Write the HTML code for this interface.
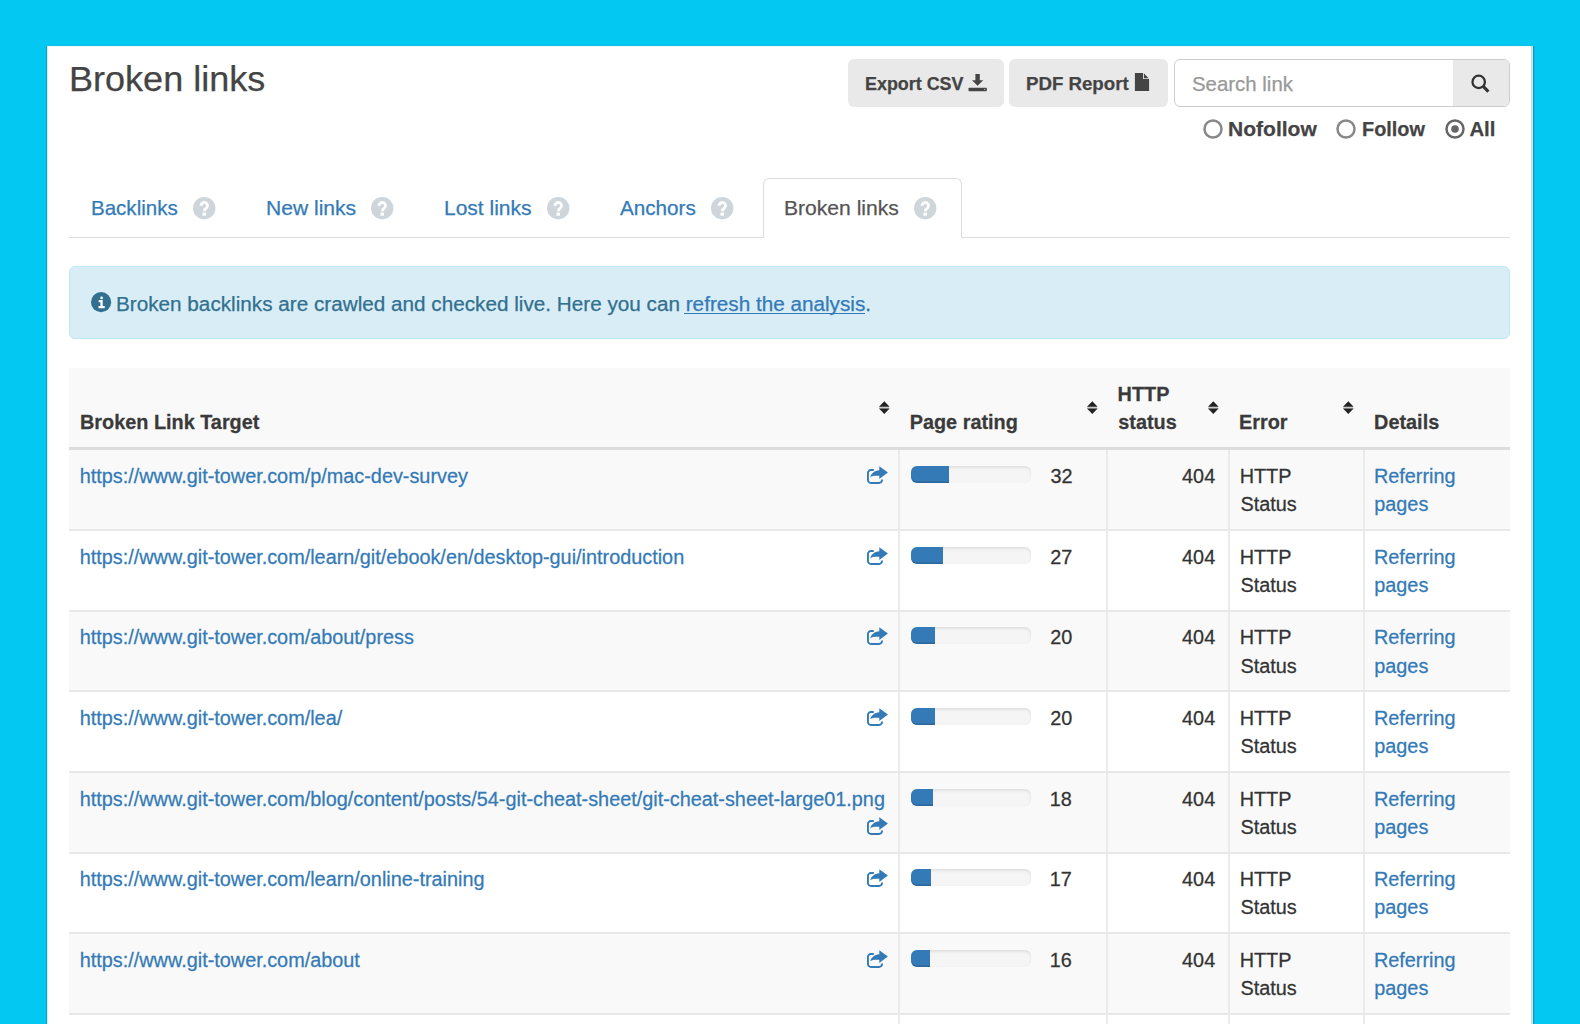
<!DOCTYPE html><html><head><meta charset="utf-8"><style>
html,body{margin:0;padding:0;}
body{width:1580px;height:1024px;overflow:hidden;background:#03c8f1;position:relative;font-family:"Liberation Sans",sans-serif;}
.t{position:absolute;white-space:nowrap;-webkit-text-stroke:0.25px currentColor;}
.b{position:absolute;box-sizing:border-box;}
svg{position:absolute;overflow:visible;}
</style></head><body>
<div class="b" style="left:47.00px;top:46.00px;width:1484.00px;height:978.00px;background:#fff;"></div>
<div class="b" style="left:46.00px;top:46.00px;width:1.00px;height:978.00px;background:#2497b3;"></div>
<div class="b" style="left:47.00px;top:46.00px;width:1.00px;height:978.00px;background:#c2f5fd;"></div>
<div class="b" style="left:47.00px;top:45.00px;width:1484.00px;height:1.00px;background:#14bce0;"></div>
<div class="b" style="left:48.00px;top:46.00px;width:1483.00px;height:1.00px;background:#ecfcff;"></div>
<div class="b" style="left:1531.00px;top:46.00px;width:1.00px;height:978.00px;background:#c5dbe0;"></div>
<div class="b" style="left:1532.00px;top:46.00px;width:1.00px;height:978.00px;background:#b8eef8;"></div>
<div class="b" style="left:1533.00px;top:46.00px;width:1.00px;height:978.00px;background:#1f92ae;"></div>
<div class="b" style="left:1534.00px;top:46.00px;width:1.00px;height:978.00px;background:#12b6dc;"></div>
<div class="t" style="left:68.81px;top:57.92px;font-size:35.90px;line-height:43.08px;color:#444;transform:scale(1.0043,1.0000);transform-origin:0 33.98px;">Broken links</div>
<div class="b" style="left:848.00px;top:59.00px;width:155.50px;height:47.50px;background:#e9e9e9;border-radius:6px;"></div>
<div class="t" style="left:864.58px;top:72.98px;font-size:18.40px;line-height:22.08px;color:#444;font-weight:bold;transform:scale(0.9732,1.0000);transform-origin:0 17.42px;">Export CSV</div>
<div class="b" style="left:1009.00px;top:59.00px;width:159.30px;height:47.50px;background:#e9e9e9;border-radius:6px;"></div>
<div class="t" style="left:1025.73px;top:72.98px;font-size:18.40px;line-height:22.08px;color:#444;font-weight:bold;transform:scale(1.0145,1.0000);transform-origin:0 17.42px;">PDF Report</div>
<svg style="left:966px;top:70px" width="24" height="24" viewBox="0 0 24 24"><path d="M9.4 4.1h4.4V10.2h3.4L11.6 15.8 6 10.2h3.4z" fill="#444"/><rect x="2.5" y="17.7" width="18.3" height="3.6" rx="0.8" fill="#444"/><circle cx="18.6" cy="19.4" r="0.6" fill="#bbb"/></svg>
<svg style="left:1134px;top:72px" width="18" height="22" viewBox="0 0 18 22"><path d="M0.9 1H9.1V7H15.1V19.1H0.9z" fill="#444"/><path d="M10 1.5V6.3H14.6z" fill="#444"/></svg>
<div class="b" style="left:1174.00px;top:59.00px;width:336.00px;height:48.00px;background:#fff;border:1.4px solid #ccc;border-radius:6px;"></div>
<div class="b" style="left:1452.70px;top:60.40px;width:55.90px;height:45.20px;background:#e9e9e9;border-radius:0 5px 5px 0;"></div>
<div class="t" style="left:1191.72px;top:72.49px;font-size:20.30px;line-height:24.36px;color:#999;transform:scale(1.0060,1.0000);transform-origin:0 19.21px;">Search link</div>
<svg style="left:1466px;top:70px" width="28" height="28" viewBox="0 0 28 28"><circle cx="12.7" cy="11.9" r="6.2" fill="none" stroke="#333" stroke-width="2.3"/><path d="M17.2 16.4l5.2 5.2" stroke="#333" stroke-width="3"/></svg>
<svg style="left:1202.15px;top:118.45px" width="22" height="22" viewBox="0 0 22 22"><circle cx="11" cy="11" r="8.5" fill="#fff" stroke="#888" stroke-width="2.5"/></svg>
<div class="t" style="left:1227.98px;top:117.29px;font-size:20.40px;line-height:24.48px;color:#444;font-weight:bold;transform:scale(1.0313,1.0000);transform-origin:0 19.31px;">Nofollow</div>
<svg style="left:1335.00px;top:118.45px" width="22" height="22" viewBox="0 0 22 22"><circle cx="11" cy="11" r="8.5" fill="#fff" stroke="#888" stroke-width="2.5"/></svg>
<div class="t" style="left:1361.66px;top:117.29px;font-size:20.40px;line-height:24.48px;color:#444;font-weight:bold;transform:scale(0.9739,1.0000);transform-origin:0 19.31px;">Follow</div>
<svg style="left:1443.50px;top:118.45px" width="22" height="22" viewBox="0 0 22 22"><circle cx="11" cy="11" r="8.5" fill="#fff" stroke="#666" stroke-width="2.5"/><circle cx="11" cy="11" r="3.8" fill="#666"/></svg>
<div class="t" style="left:1469.40px;top:117.29px;font-size:20.40px;line-height:24.48px;color:#444;font-weight:bold;">All</div>
<div class="b" style="left:69.00px;top:236.60px;width:1441.00px;height:1.40px;background:#ddd;"></div>
<div class="b" style="left:763.40px;top:178.20px;width:198.60px;height:59.80px;background:#fff;border:1.4px solid #ddd;border-bottom:none;border-radius:6px 6px 0 0;"></div>
<div class="t" style="left:91.31px;top:196.96px;font-size:19.80px;line-height:23.76px;color:#337ab7;transform:scale(1.0375,1.0000);transform-origin:0 18.74px;">Backlinks</div>
<svg style="left:193.20px;top:196.90px" width="22.4" height="22.4" viewBox="0 0 22.4 22.4"><circle cx="11.2" cy="11.2" r="11.2" fill="#ced6db"/><path d="M8 8.7A3.25 3.25 0 1 1 13.3 11.2C12 12 11.3 12.4 11.3 14.2" fill="none" stroke="#fff" stroke-width="2.9"/><rect x="9.5" y="15.6" width="3.5" height="3.1" fill="#fff"/></svg>
<div class="t" style="left:266.07px;top:196.96px;font-size:19.80px;line-height:23.76px;color:#337ab7;transform:scale(1.0646,1.0000);transform-origin:0 18.74px;">New links</div>
<svg style="left:371.00px;top:196.90px" width="22.4" height="22.4" viewBox="0 0 22.4 22.4"><circle cx="11.2" cy="11.2" r="11.2" fill="#ced6db"/><path d="M8 8.7A3.25 3.25 0 1 1 13.3 11.2C12 12 11.3 12.4 11.3 14.2" fill="none" stroke="#fff" stroke-width="2.9"/><rect x="9.5" y="15.6" width="3.5" height="3.1" fill="#fff"/></svg>
<div class="t" style="left:443.58px;top:196.96px;font-size:19.80px;line-height:23.76px;color:#337ab7;transform:scale(1.0608,1.0000);transform-origin:0 18.74px;">Lost links</div>
<svg style="left:546.50px;top:196.90px" width="22.4" height="22.4" viewBox="0 0 22.4 22.4"><circle cx="11.2" cy="11.2" r="11.2" fill="#ced6db"/><path d="M8 8.7A3.25 3.25 0 1 1 13.3 11.2C12 12 11.3 12.4 11.3 14.2" fill="none" stroke="#fff" stroke-width="2.9"/><rect x="9.5" y="15.6" width="3.5" height="3.1" fill="#fff"/></svg>
<div class="t" style="left:620.30px;top:196.96px;font-size:19.80px;line-height:23.76px;color:#337ab7;transform:scale(1.0449,1.0000);transform-origin:0 18.74px;">Anchors</div>
<svg style="left:711.30px;top:196.90px" width="22.4" height="22.4" viewBox="0 0 22.4 22.4"><circle cx="11.2" cy="11.2" r="11.2" fill="#ced6db"/><path d="M8 8.7A3.25 3.25 0 1 1 13.3 11.2C12 12 11.3 12.4 11.3 14.2" fill="none" stroke="#fff" stroke-width="2.9"/><rect x="9.5" y="15.6" width="3.5" height="3.1" fill="#fff"/></svg>
<div class="t" style="left:784.37px;top:196.96px;font-size:19.80px;line-height:23.76px;color:#555;transform:scale(1.0654,1.0000);transform-origin:0 18.74px;">Broken links</div>
<svg style="left:914.40px;top:196.90px" width="22.4" height="22.4" viewBox="0 0 22.4 22.4"><circle cx="11.2" cy="11.2" r="11.2" fill="#ced6db"/><path d="M8 8.7A3.25 3.25 0 1 1 13.3 11.2C12 12 11.3 12.4 11.3 14.2" fill="none" stroke="#fff" stroke-width="2.9"/><rect x="9.5" y="15.6" width="3.5" height="3.1" fill="#fff"/></svg>
<div class="b" style="left:69.00px;top:266.40px;width:1441.00px;height:73.00px;background:#d9edf7;border:1.4px solid #bce8f1;border-radius:6px;"></div>
<svg style="left:91.3px;top:292px" width="20.4" height="20.4" viewBox="0 0 20.4 20.4"><circle cx="10.1" cy="10.2" r="10.1" fill="#31708f"/><circle cx="10.6" cy="5.9" r="1.35" fill="#fff"/><path d="M7.7 8h4v6h2v2.2H7.5V14h1.9v-3.8H7.7z" fill="#fff"/></svg>
<div class="t" style="left:115.92px;top:291.87px;font-size:20.0px;line-height:24px;color:#31708f;transform:scaleX(1.0353);transform-origin:0 0;">Broken backlinks are crawled and checked live. Here you can <span style="color:#337ab7;">refresh the analysis</span>.</div>
<div class="b" style="left:684.00px;top:312.60px;width:181.40px;height:1.30px;background:#337ab7;"></div>
<div class="b" style="left:69.00px;top:368.00px;width:1441.00px;height:79.00px;background:#f9f9f9;"></div>
<div class="b" style="left:69.00px;top:447.00px;width:1441.00px;height:3.00px;background:#ddd;"></div>
<div class="t" style="left:80.03px;top:411.01px;font-size:19.85px;line-height:23.82px;color:#3a3a3a;font-weight:bold;transform:scale(1.0000,1.0350);transform-origin:0 18.79px;">Broken Link Target</div>
<svg style="left:878.80px;top:401.20px" width="10.6" height="13" viewBox="0 0 10.6 13"><rect x="0.3" y="5.6" width="10" height="2.2" fill="#c9cccd"/><path d="M5.3 0.2L10.6 5.8H0z" fill="#222"/><path d="M5.3 12.9L10.6 7.6H0z" fill="#222"/></svg>
<div class="t" style="left:909.73px;top:411.01px;font-size:19.85px;line-height:23.82px;color:#3a3a3a;font-weight:bold;transform:scale(1.0000,1.0350);transform-origin:0 18.79px;">Page rating</div>
<svg style="left:1087.00px;top:401.20px" width="10.6" height="13" viewBox="0 0 10.6 13"><rect x="0.3" y="5.6" width="10" height="2.2" fill="#c9cccd"/><path d="M5.3 0.2L10.6 5.8H0z" fill="#222"/><path d="M5.3 12.9L10.6 7.6H0z" fill="#222"/></svg>
<div class="t" style="left:1117.62px;top:382.91px;font-size:19.85px;line-height:23.82px;color:#3a3a3a;font-weight:bold;transform:scale(1.0000,1.0350);transform-origin:0 18.79px;">HTTP</div>
<div class="t" style="left:1118.25px;top:411.01px;font-size:19.85px;line-height:23.82px;color:#3a3a3a;font-weight:bold;transform:scale(1.0000,1.0350);transform-origin:0 18.79px;">status</div>
<svg style="left:1207.70px;top:401.20px" width="10.6" height="13" viewBox="0 0 10.6 13"><rect x="0.3" y="5.6" width="10" height="2.2" fill="#c9cccd"/><path d="M5.3 0.2L10.6 5.8H0z" fill="#222"/><path d="M5.3 12.9L10.6 7.6H0z" fill="#222"/></svg>
<div class="t" style="left:1239.03px;top:411.01px;font-size:19.85px;line-height:23.82px;color:#3a3a3a;font-weight:bold;transform:scale(1.0000,1.0350);transform-origin:0 18.79px;">Error</div>
<svg style="left:1343.00px;top:401.20px" width="10.6" height="13" viewBox="0 0 10.6 13"><rect x="0.3" y="5.6" width="10" height="2.2" fill="#c9cccd"/><path d="M5.3 0.2L10.6 5.8H0z" fill="#222"/><path d="M5.3 12.9L10.6 7.6H0z" fill="#222"/></svg>
<div class="t" style="left:1374.12px;top:411.01px;font-size:19.85px;line-height:23.82px;color:#3a3a3a;font-weight:bold;transform:scale(1.0000,1.0350);transform-origin:0 18.79px;">Details</div>
<div class="b" style="left:69.00px;top:450.00px;width:1441.00px;height:79.90px;background:#f9f9f9;"></div>
<div class="t" style="left:79.72px;top:465.01px;font-size:19.85px;line-height:23.82px;color:#337ab7;transform:scale(1.0000,1.0350);transform-origin:0 18.79px;">https://www.git-tower.com/p/mac-dev-survey</div>
<svg style="left:866.00px;top:465.00px" width="23" height="21" viewBox="0 0 23 21"><path d="M7.8 5.05H5A3 3 0 0 0 1.95 8.05V15.05A3 3 0 0 0 5 18.05H13.05A3 3 0 0 0 16.05 15.05V14.6" fill="none" stroke="#337ab7" stroke-width="1.9"/><path d="M13.3 1.2L21.9 7.5L13.3 13.9V10.8C9.5 10.5 6.5 10.6 4.3 12.3C5.2 8.5 8.5 5.5 13.3 5.3Z" fill="#337ab7"/></svg>
<div class="b" style="left:911.00px;top:466.00px;width:119.50px;height:17.00px;background:#f5f5f5;border-radius:6px;box-shadow:inset 0 1.4px 2.8px rgba(0,0,0,.1);overflow:hidden;"></div>
<div class="b" style="left:911.00px;top:466.00px;width:38.24px;height:17.00px;background:#337ab7;border-radius:6px 0 0 6px;box-shadow:inset 0 -1.4px 0 rgba(0,0,0,.15);"></div>
<div class="t" style="left:1050.45px;top:465.01px;font-size:19.85px;line-height:23.82px;color:#333;transform:scale(1.0000,1.0350);transform-origin:0 18.79px;">32</div>
<div class="t" style="left:1182.08px;top:465.01px;font-size:19.85px;line-height:23.82px;color:#333;transform:scale(1.0000,1.0350);transform-origin:0 18.79px;">404</div>
<div class="t" style="left:1239.67px;top:465.01px;font-size:19.85px;line-height:23.82px;color:#333;transform:scale(1.0000,1.0350);transform-origin:0 18.79px;">HTTP</div>
<div class="t" style="left:1240.42px;top:493.21px;font-size:19.85px;line-height:23.82px;color:#333;transform:scale(1.0000,1.0350);transform-origin:0 18.79px;">Status</div>
<div class="t" style="left:1373.88px;top:465.01px;font-size:19.85px;line-height:23.82px;color:#337ab7;transform:scale(1.0000,1.0350);transform-origin:0 18.79px;">Referring</div>
<div class="t" style="left:1374.25px;top:493.21px;font-size:19.85px;line-height:23.82px;color:#337ab7;transform:scale(1.0000,1.0350);transform-origin:0 18.79px;">pages</div>
<div class="t" style="left:79.72px;top:545.66px;font-size:19.85px;line-height:23.82px;color:#337ab7;transform:scale(1.0000,1.0350);transform-origin:0 18.79px;">https://www.git-tower.com/learn/git/ebook/en/desktop-gui/introduction</div>
<svg style="left:866.00px;top:545.65px" width="23" height="21" viewBox="0 0 23 21"><path d="M7.8 5.05H5A3 3 0 0 0 1.95 8.05V15.05A3 3 0 0 0 5 18.05H13.05A3 3 0 0 0 16.05 15.05V14.6" fill="none" stroke="#337ab7" stroke-width="1.9"/><path d="M13.3 1.2L21.9 7.5L13.3 13.9V10.8C9.5 10.5 6.5 10.6 4.3 12.3C5.2 8.5 8.5 5.5 13.3 5.3Z" fill="#337ab7"/></svg>
<div class="b" style="left:911.00px;top:546.65px;width:119.50px;height:17.00px;background:#f5f5f5;border-radius:6px;box-shadow:inset 0 1.4px 2.8px rgba(0,0,0,.1);overflow:hidden;"></div>
<div class="b" style="left:911.00px;top:546.65px;width:32.26px;height:17.00px;background:#337ab7;border-radius:6px 0 0 6px;box-shadow:inset 0 -1.4px 0 rgba(0,0,0,.15);"></div>
<div class="t" style="left:1050.20px;top:545.66px;font-size:19.85px;line-height:23.82px;color:#333;transform:scale(1.0000,1.0350);transform-origin:0 18.79px;">27</div>
<div class="t" style="left:1182.08px;top:545.66px;font-size:19.85px;line-height:23.82px;color:#333;transform:scale(1.0000,1.0350);transform-origin:0 18.79px;">404</div>
<div class="t" style="left:1239.67px;top:545.66px;font-size:19.85px;line-height:23.82px;color:#333;transform:scale(1.0000,1.0350);transform-origin:0 18.79px;">HTTP</div>
<div class="t" style="left:1240.42px;top:573.86px;font-size:19.85px;line-height:23.82px;color:#333;transform:scale(1.0000,1.0350);transform-origin:0 18.79px;">Status</div>
<div class="t" style="left:1373.88px;top:545.66px;font-size:19.85px;line-height:23.82px;color:#337ab7;transform:scale(1.0000,1.0350);transform-origin:0 18.79px;">Referring</div>
<div class="t" style="left:1374.25px;top:573.86px;font-size:19.85px;line-height:23.82px;color:#337ab7;transform:scale(1.0000,1.0350);transform-origin:0 18.79px;">pages</div>
<div class="b" style="left:69.00px;top:611.30px;width:1441.00px;height:79.90px;background:#f9f9f9;"></div>
<div class="t" style="left:79.72px;top:626.31px;font-size:19.85px;line-height:23.82px;color:#337ab7;transform:scale(1.0000,1.0350);transform-origin:0 18.79px;">https://www.git-tower.com/about/press</div>
<svg style="left:866.00px;top:626.30px" width="23" height="21" viewBox="0 0 23 21"><path d="M7.8 5.05H5A3 3 0 0 0 1.95 8.05V15.05A3 3 0 0 0 5 18.05H13.05A3 3 0 0 0 16.05 15.05V14.6" fill="none" stroke="#337ab7" stroke-width="1.9"/><path d="M13.3 1.2L21.9 7.5L13.3 13.9V10.8C9.5 10.5 6.5 10.6 4.3 12.3C5.2 8.5 8.5 5.5 13.3 5.3Z" fill="#337ab7"/></svg>
<div class="b" style="left:911.00px;top:627.30px;width:119.50px;height:17.00px;background:#f5f5f5;border-radius:6px;box-shadow:inset 0 1.4px 2.8px rgba(0,0,0,.1);overflow:hidden;"></div>
<div class="b" style="left:911.00px;top:627.30px;width:23.90px;height:17.00px;background:#337ab7;border-radius:6px 0 0 6px;box-shadow:inset 0 -1.4px 0 rgba(0,0,0,.15);"></div>
<div class="t" style="left:1050.20px;top:626.31px;font-size:19.85px;line-height:23.82px;color:#333;transform:scale(1.0000,1.0350);transform-origin:0 18.79px;">20</div>
<div class="t" style="left:1182.08px;top:626.31px;font-size:19.85px;line-height:23.82px;color:#333;transform:scale(1.0000,1.0350);transform-origin:0 18.79px;">404</div>
<div class="t" style="left:1239.67px;top:626.31px;font-size:19.85px;line-height:23.82px;color:#333;transform:scale(1.0000,1.0350);transform-origin:0 18.79px;">HTTP</div>
<div class="t" style="left:1240.42px;top:654.51px;font-size:19.85px;line-height:23.82px;color:#333;transform:scale(1.0000,1.0350);transform-origin:0 18.79px;">Status</div>
<div class="t" style="left:1373.88px;top:626.31px;font-size:19.85px;line-height:23.82px;color:#337ab7;transform:scale(1.0000,1.0350);transform-origin:0 18.79px;">Referring</div>
<div class="t" style="left:1374.25px;top:654.51px;font-size:19.85px;line-height:23.82px;color:#337ab7;transform:scale(1.0000,1.0350);transform-origin:0 18.79px;">pages</div>
<div class="t" style="left:79.72px;top:706.96px;font-size:19.85px;line-height:23.82px;color:#337ab7;transform:scale(1.0000,1.0350);transform-origin:0 18.79px;">https://www.git-tower.com/lea/</div>
<svg style="left:866.00px;top:706.95px" width="23" height="21" viewBox="0 0 23 21"><path d="M7.8 5.05H5A3 3 0 0 0 1.95 8.05V15.05A3 3 0 0 0 5 18.05H13.05A3 3 0 0 0 16.05 15.05V14.6" fill="none" stroke="#337ab7" stroke-width="1.9"/><path d="M13.3 1.2L21.9 7.5L13.3 13.9V10.8C9.5 10.5 6.5 10.6 4.3 12.3C5.2 8.5 8.5 5.5 13.3 5.3Z" fill="#337ab7"/></svg>
<div class="b" style="left:911.00px;top:707.95px;width:119.50px;height:17.00px;background:#f5f5f5;border-radius:6px;box-shadow:inset 0 1.4px 2.8px rgba(0,0,0,.1);overflow:hidden;"></div>
<div class="b" style="left:911.00px;top:707.95px;width:23.90px;height:17.00px;background:#337ab7;border-radius:6px 0 0 6px;box-shadow:inset 0 -1.4px 0 rgba(0,0,0,.15);"></div>
<div class="t" style="left:1050.20px;top:706.96px;font-size:19.85px;line-height:23.82px;color:#333;transform:scale(1.0000,1.0350);transform-origin:0 18.79px;">20</div>
<div class="t" style="left:1182.08px;top:706.96px;font-size:19.85px;line-height:23.82px;color:#333;transform:scale(1.0000,1.0350);transform-origin:0 18.79px;">404</div>
<div class="t" style="left:1239.67px;top:706.96px;font-size:19.85px;line-height:23.82px;color:#333;transform:scale(1.0000,1.0350);transform-origin:0 18.79px;">HTTP</div>
<div class="t" style="left:1240.42px;top:735.16px;font-size:19.85px;line-height:23.82px;color:#333;transform:scale(1.0000,1.0350);transform-origin:0 18.79px;">Status</div>
<div class="t" style="left:1373.88px;top:706.96px;font-size:19.85px;line-height:23.82px;color:#337ab7;transform:scale(1.0000,1.0350);transform-origin:0 18.79px;">Referring</div>
<div class="t" style="left:1374.25px;top:735.16px;font-size:19.85px;line-height:23.82px;color:#337ab7;transform:scale(1.0000,1.0350);transform-origin:0 18.79px;">pages</div>
<div class="b" style="left:69.00px;top:772.60px;width:1441.00px;height:79.90px;background:#f9f9f9;"></div>
<div class="t" style="left:79.72px;top:787.61px;font-size:19.85px;line-height:23.82px;color:#337ab7;transform:scale(1.0000,1.0350);transform-origin:0 18.79px;">https://www.git-tower.com/blog/content/posts/54-git-cheat-sheet/git-cheat-sheet-large01.png</div>
<svg style="left:866.00px;top:815.80px" width="23" height="21" viewBox="0 0 23 21"><path d="M7.8 5.05H5A3 3 0 0 0 1.95 8.05V15.05A3 3 0 0 0 5 18.05H13.05A3 3 0 0 0 16.05 15.05V14.6" fill="none" stroke="#337ab7" stroke-width="1.9"/><path d="M13.3 1.2L21.9 7.5L13.3 13.9V10.8C9.5 10.5 6.5 10.6 4.3 12.3C5.2 8.5 8.5 5.5 13.3 5.3Z" fill="#337ab7"/></svg>
<div class="b" style="left:911.00px;top:788.60px;width:119.50px;height:17.00px;background:#f5f5f5;border-radius:6px;box-shadow:inset 0 1.4px 2.8px rgba(0,0,0,.1);overflow:hidden;"></div>
<div class="b" style="left:911.00px;top:788.60px;width:21.51px;height:17.00px;background:#337ab7;border-radius:6px 0 0 6px;box-shadow:inset 0 -1.4px 0 rgba(0,0,0,.15);"></div>
<div class="t" style="left:1049.70px;top:787.61px;font-size:19.85px;line-height:23.82px;color:#333;transform:scale(1.0000,1.0350);transform-origin:0 18.79px;">18</div>
<div class="t" style="left:1182.08px;top:787.61px;font-size:19.85px;line-height:23.82px;color:#333;transform:scale(1.0000,1.0350);transform-origin:0 18.79px;">404</div>
<div class="t" style="left:1239.67px;top:787.61px;font-size:19.85px;line-height:23.82px;color:#333;transform:scale(1.0000,1.0350);transform-origin:0 18.79px;">HTTP</div>
<div class="t" style="left:1240.42px;top:815.81px;font-size:19.85px;line-height:23.82px;color:#333;transform:scale(1.0000,1.0350);transform-origin:0 18.79px;">Status</div>
<div class="t" style="left:1373.88px;top:787.61px;font-size:19.85px;line-height:23.82px;color:#337ab7;transform:scale(1.0000,1.0350);transform-origin:0 18.79px;">Referring</div>
<div class="t" style="left:1374.25px;top:815.81px;font-size:19.85px;line-height:23.82px;color:#337ab7;transform:scale(1.0000,1.0350);transform-origin:0 18.79px;">pages</div>
<div class="t" style="left:79.72px;top:868.26px;font-size:19.85px;line-height:23.82px;color:#337ab7;transform:scale(1.0000,1.0350);transform-origin:0 18.79px;">https://www.git-tower.com/learn/online-training</div>
<svg style="left:866.00px;top:868.25px" width="23" height="21" viewBox="0 0 23 21"><path d="M7.8 5.05H5A3 3 0 0 0 1.95 8.05V15.05A3 3 0 0 0 5 18.05H13.05A3 3 0 0 0 16.05 15.05V14.6" fill="none" stroke="#337ab7" stroke-width="1.9"/><path d="M13.3 1.2L21.9 7.5L13.3 13.9V10.8C9.5 10.5 6.5 10.6 4.3 12.3C5.2 8.5 8.5 5.5 13.3 5.3Z" fill="#337ab7"/></svg>
<div class="b" style="left:911.00px;top:869.25px;width:119.50px;height:17.00px;background:#f5f5f5;border-radius:6px;box-shadow:inset 0 1.4px 2.8px rgba(0,0,0,.1);overflow:hidden;"></div>
<div class="b" style="left:911.00px;top:869.25px;width:20.32px;height:17.00px;background:#337ab7;border-radius:6px 0 0 6px;box-shadow:inset 0 -1.4px 0 rgba(0,0,0,.15);"></div>
<div class="t" style="left:1049.70px;top:868.26px;font-size:19.85px;line-height:23.82px;color:#333;transform:scale(1.0000,1.0350);transform-origin:0 18.79px;">17</div>
<div class="t" style="left:1182.08px;top:868.26px;font-size:19.85px;line-height:23.82px;color:#333;transform:scale(1.0000,1.0350);transform-origin:0 18.79px;">404</div>
<div class="t" style="left:1239.67px;top:868.26px;font-size:19.85px;line-height:23.82px;color:#333;transform:scale(1.0000,1.0350);transform-origin:0 18.79px;">HTTP</div>
<div class="t" style="left:1240.42px;top:896.46px;font-size:19.85px;line-height:23.82px;color:#333;transform:scale(1.0000,1.0350);transform-origin:0 18.79px;">Status</div>
<div class="t" style="left:1373.88px;top:868.26px;font-size:19.85px;line-height:23.82px;color:#337ab7;transform:scale(1.0000,1.0350);transform-origin:0 18.79px;">Referring</div>
<div class="t" style="left:1374.25px;top:896.46px;font-size:19.85px;line-height:23.82px;color:#337ab7;transform:scale(1.0000,1.0350);transform-origin:0 18.79px;">pages</div>
<div class="b" style="left:69.00px;top:933.90px;width:1441.00px;height:79.90px;background:#f9f9f9;"></div>
<div class="t" style="left:79.72px;top:948.91px;font-size:19.85px;line-height:23.82px;color:#337ab7;transform:scale(1.0000,1.0350);transform-origin:0 18.79px;">https://www.git-tower.com/about</div>
<svg style="left:866.00px;top:948.90px" width="23" height="21" viewBox="0 0 23 21"><path d="M7.8 5.05H5A3 3 0 0 0 1.95 8.05V15.05A3 3 0 0 0 5 18.05H13.05A3 3 0 0 0 16.05 15.05V14.6" fill="none" stroke="#337ab7" stroke-width="1.9"/><path d="M13.3 1.2L21.9 7.5L13.3 13.9V10.8C9.5 10.5 6.5 10.6 4.3 12.3C5.2 8.5 8.5 5.5 13.3 5.3Z" fill="#337ab7"/></svg>
<div class="b" style="left:911.00px;top:949.90px;width:119.50px;height:17.00px;background:#f5f5f5;border-radius:6px;box-shadow:inset 0 1.4px 2.8px rgba(0,0,0,.1);overflow:hidden;"></div>
<div class="b" style="left:911.00px;top:949.90px;width:19.12px;height:17.00px;background:#337ab7;border-radius:6px 0 0 6px;box-shadow:inset 0 -1.4px 0 rgba(0,0,0,.15);"></div>
<div class="t" style="left:1049.70px;top:948.91px;font-size:19.85px;line-height:23.82px;color:#333;transform:scale(1.0000,1.0350);transform-origin:0 18.79px;">16</div>
<div class="t" style="left:1182.08px;top:948.91px;font-size:19.85px;line-height:23.82px;color:#333;transform:scale(1.0000,1.0350);transform-origin:0 18.79px;">404</div>
<div class="t" style="left:1239.67px;top:948.91px;font-size:19.85px;line-height:23.82px;color:#333;transform:scale(1.0000,1.0350);transform-origin:0 18.79px;">HTTP</div>
<div class="t" style="left:1240.42px;top:977.11px;font-size:19.85px;line-height:23.82px;color:#333;transform:scale(1.0000,1.0350);transform-origin:0 18.79px;">Status</div>
<div class="t" style="left:1373.88px;top:948.91px;font-size:19.85px;line-height:23.82px;color:#337ab7;transform:scale(1.0000,1.0350);transform-origin:0 18.79px;">Referring</div>
<div class="t" style="left:1374.25px;top:977.11px;font-size:19.85px;line-height:23.82px;color:#337ab7;transform:scale(1.0000,1.0350);transform-origin:0 18.79px;">pages</div>
<div class="b" style="left:898.00px;top:450.00px;width:2.00px;height:574.00px;background:#ebebeb;"></div>
<div class="b" style="left:1106.00px;top:450.00px;width:2.00px;height:574.00px;background:#ebebeb;"></div>
<div class="b" style="left:1227.50px;top:450.00px;width:2.00px;height:574.00px;background:#ebebeb;"></div>
<div class="b" style="left:1362.50px;top:450.00px;width:2.00px;height:574.00px;background:#ebebeb;"></div>
<div class="b" style="left:69.00px;top:528.90px;width:1441.00px;height:2.00px;background:#e8e8e8;"></div>
<div class="b" style="left:69.00px;top:609.55px;width:1441.00px;height:2.00px;background:#e8e8e8;"></div>
<div class="b" style="left:69.00px;top:690.20px;width:1441.00px;height:2.00px;background:#e8e8e8;"></div>
<div class="b" style="left:69.00px;top:770.85px;width:1441.00px;height:2.00px;background:#e8e8e8;"></div>
<div class="b" style="left:69.00px;top:851.50px;width:1441.00px;height:2.00px;background:#e8e8e8;"></div>
<div class="b" style="left:69.00px;top:932.15px;width:1441.00px;height:2.00px;background:#e8e8e8;"></div>
<div class="b" style="left:69.00px;top:1012.80px;width:1441.00px;height:2.00px;background:#e8e8e8;"></div>
<div class="b" style="left:69.00px;top:1093.45px;width:1441.00px;height:2.00px;background:#e8e8e8;"></div>
</body></html>
